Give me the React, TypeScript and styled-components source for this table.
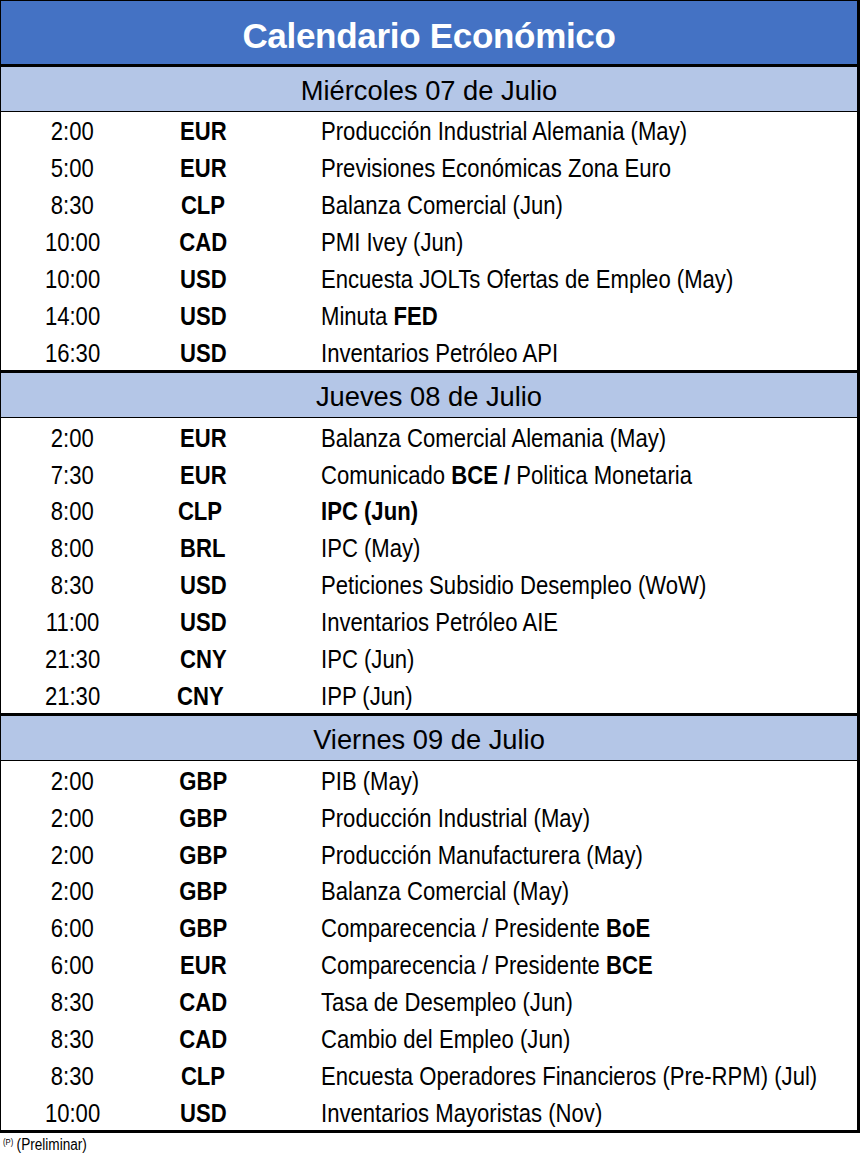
import React from "react";
import styled, { createGlobalStyle } from "styled-components";

const GlobalStyle = createGlobalStyle`
  html, body { margin: 0; padding: 0; background: #ffffff; overflow: hidden; }
  body { font-family: "Liberation Sans", Arial, sans-serif; color: #000; }
`;

const Page = styled.div`
  width: 860px;
  box-sizing: border-box;
`;

const Table = styled.div`
  width: 860px;
  box-sizing: border-box;
  border-left: 1px solid #000;
  border-top: 1px solid #000;
  border-right: 3px solid #000;
  border-bottom: 3px solid #000;
  display: flex;
  flex-direction: column;
`;

const Title = styled.div`
  height: 63px;
  background: #4472c4;
  color: #ffffff;
  display: flex;
  align-items: center;
  justify-content: center;
  padding-top: 6px;
  box-sizing: border-box;
  font-family: "Liberation Sans", Arial, sans-serif;
  font-weight: 700;
  font-size: 35px;
  letter-spacing: -0.3px;
`;

const Section = styled.section`
  border-top: 3px solid #000;
  display: flex;
  flex-direction: column;
`;

const DayHeader = styled.div`
  height: 41px;
  background: #b4c6e7;
  border-bottom: 1px solid #000;
  display: flex;
  align-items: center;
  justify-content: center;
  padding-top: 3px;
  box-sizing: content-box;
  font-family: "Liberation Sans", Arial, sans-serif;
  font-size: 27.3px;
`;

const Row = styled.div`
  height: 36.9px;
  box-sizing: border-box;
  padding-top: 3px;
  display: grid;
  grid-template-columns: 143px 118px 1fr;
  align-items: center;
  font-family: "Liberation Sans", Arial, sans-serif;
  font-size: 26px;
  white-space: nowrap;
`;

/* Condensed rendering to match the narrow face of the reference */
const Narrow = styled.span<{ $origin?: "left" | "center" }>`
  display: inline-block;
  transform: scaleX(0.85);
  transform-origin: ${(p) => (p.$origin === "left" ? "left center" : "center center")};
`;

const Time = styled.div`
  text-align: center;
`;

const Currency = styled.div<{ $shift?: number }>`
  text-align: center;
  font-weight: 700;
  padding-right: ${(p) => (p.$shift ? p.$shift * 2 : 0)}px;
`;

const Desc = styled.div`
  padding-left: 59px;
  overflow: hidden;
  b {
    font-weight: 700;
  }
`;

const Footer = styled.div`
  padding: 3px 0 0 3px;
  font-family: "Liberation Sans", Arial, sans-serif;
  font-size: 16px;
  sup {
    font-size: 9px;
    vertical-align: 5px;
    margin-right: 4px;
  }
`;

type Item = { time: string; cur: string; desc: React.ReactNode; shift?: number };
type Day = { title: string; items: Item[] };

const days: Day[] = [
  {
    title: "Miércoles 07 de Julio",
    items: [
      { time: "2:00", cur: "EUR", desc: "Producción Industrial Alemania (May)" },
      { time: "5:00", cur: "EUR", desc: "Previsiones Económicas Zona Euro" },
      { time: "8:30", cur: "CLP", desc: "Balanza Comercial (Jun)" },
      { time: "10:00", cur: "CAD", desc: "PMI Ivey (Jun)" },
      { time: "10:00", cur: "USD", desc: "Encuesta JOLTs Ofertas de Empleo (May)" },
      { time: "14:00", cur: "USD", desc: <>Minuta <b>FED</b></> },
      { time: "16:30", cur: "USD", desc: "Inventarios Petróleo API" },
    ],
  },
  {
    title: "Jueves 08 de Julio",
    items: [
      { time: "2:00", cur: "EUR", desc: "Balanza Comercial Alemania (May)" },
      { time: "7:30", cur: "EUR", desc: <>Comunicado <b>BCE /</b> Politica Monetaria</> },
      { time: "8:00", cur: "CLP", desc: <b>IPC (Jun)</b>, shift: 3 },
      { time: "8:00", cur: "BRL", desc: "IPC (May)" },
      { time: "8:30", cur: "USD", desc: "Peticiones Subsidio Desempleo (WoW)" },
      { time: "11:00", cur: "USD", desc: "Inventarios Petróleo AIE" },
      { time: "21:30", cur: "CNY", desc: "IPC (Jun)" },
      { time: "21:30", cur: "CNY", desc: "IPP (Jun)", shift: 3 },
    ],
  },
  {
    title: "Viernes 09 de Julio",
    items: [
      { time: "2:00", cur: "GBP", desc: "PIB (May)" },
      { time: "2:00", cur: "GBP", desc: "Producción Industrial (May)" },
      { time: "2:00", cur: "GBP", desc: "Producción Manufacturera (May)" },
      { time: "2:00", cur: "GBP", desc: "Balanza Comercial (May)" },
      { time: "6:00", cur: "GBP", desc: <>Comparecencia / Presidente <b>BoE</b></> },
      { time: "6:00", cur: "EUR", desc: <>Comparecencia / Presidente <b>BCE</b></> },
      { time: "8:30", cur: "CAD", desc: "Tasa de Desempleo (Jun)" },
      { time: "8:30", cur: "CAD", desc: "Cambio del Empleo (Jun)" },
      { time: "8:30", cur: "CLP", desc: "Encuesta Operadores Financieros (Pre-RPM) (Jul)" },
      { time: "10:00", cur: "USD", desc: "Inventarios Mayoristas (Nov)" },
    ],
  },
];

export default function App() {
  return (
    <Page>
      <GlobalStyle />
      <Table>
        <Title>Calendario Económico</Title>
        {days.map((d) => (
          <Section key={d.title}>
            <DayHeader>{d.title}</DayHeader>
            {d.items.map((it, i) => (
              <Row key={i}>
                <Time>
                  <Narrow>{it.time}</Narrow>
                </Time>
                <Currency $shift={it.shift}>
                  <Narrow>{it.cur}</Narrow>
                </Currency>
                <Desc>
                  <Narrow $origin="left">{it.desc}</Narrow>
                </Desc>
              </Row>
            ))}
          </Section>
        ))}
      </Table>
      <Footer>
        <Narrow $origin="left">
          <sup>(P)</sup>(Preliminar)
        </Narrow>
      </Footer>
    </Page>
  );
}
